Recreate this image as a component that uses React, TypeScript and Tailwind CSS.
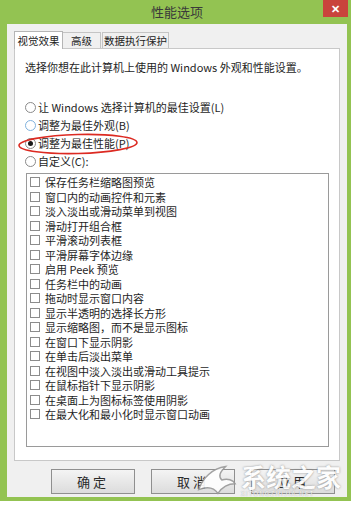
import React from 'react';

const FONT = "font-['Noto_Sans_CJK_SC','Noto_Sans',sans-serif]";

const effects = [
	'保存任务栏缩略图预览',
	'窗口内的动画控件和元素',
	'淡入淡出或滑动菜单到视图',
	'滑动打开组合框',
	'平滑滚动列表框',
	'平滑屏幕字体边缘',
	'启用 Peek 预览',
	'任务栏中的动画',
	'拖动时显示窗口内容',
	'显示半透明的选择长方形',
	'显示缩略图，而不是显示图标',
	'在窗口下显示阴影',
	'在单击后淡出菜单',
	'在视图中淡入淡出或滑动工具提示',
	'在鼠标指针下显示阴影',
	'在桌面上为图标标签使用阴影',
	'在最大化和最小化时显示窗口动画',
];

const radios: { label: string; state: 'off' | 'hover' | 'on' }[] = [
	{ label: '让 Windows 选择计算机的最佳设置(L)', state: 'off' },
	{ label: '调整为最佳外观(B)', state: 'hover' },
	{ label: '调整为最佳性能(P)', state: 'on' },
	{ label: '自定义(C):', state: 'off' },
];

function Radio({ state }: { state: 'off' | 'hover' | 'on' }) {
	return (
		<span
			className={`flex h-[11px] w-[11px] shrink-0 items-center justify-center rounded-full border bg-white ${
				state === 'hover' ? 'border-[#7fb2de]' : 'border-[#8a8a8a]'
			}`}
		>
			{state === 'on' && <span className="h-[5px] w-[5px] rounded-full bg-[#1a1a1a]" />}
		</span>
	);
}

function Button({ label }: { label: string }) {
	return (
		<button
			type="button"
			className="flex h-[25px] w-[84px] items-center justify-center border border-[#8f8f8f] bg-gradient-to-b from-[#f4f4f4] to-[#dcdcdc] text-[13px] tracking-[3px] text-[#2a2a2a]"
		>
			{label}
		</button>
	);
}

export default function App() {
	return (
		<div className={`relative h-[508px] w-[356px] overflow-hidden bg-white ${FONT}`}>
			<div className="flex h-[501px] w-[351px] flex-col bg-[#93c352] pb-[4px] pl-[7px] pr-[4px]">
				{/* title bar */}
				<div className="relative flex h-[24px] shrink-0 items-center justify-center text-[13px] text-[#3a3a3a]">
					性能选项
					<div className="absolute right-[-1px] top-0 flex h-[17px] w-[25px] items-center justify-center bg-[#c9443c] text-[11px] font-bold text-white">
						✕
					</div>
				</div>

				{/* client */}
				<div className="flex flex-1 flex-col bg-[#f0f0f0] px-[7px]">
					<div className="flex h-[24px] shrink-0 items-end whitespace-nowrap pt-[7px] text-[10.5px] text-[#222]">
						<div className="relative z-10 mb-[-1px] flex h-[18px] w-[49px] items-center justify-center border border-b-0 border-[#b5b5b5] bg-white">
							视觉效果
						</div>
						<div className="flex h-[16px] w-[38px] items-center justify-center border border-l-0 border-b-0 border-[#c4c4c4] bg-[#f0f0f0]">
							高级
						</div>
						<div className="ml-[1px] flex h-[16px] w-[67px] items-center justify-center border border-b-0 border-[#c4c4c4] bg-[#f0f0f0]">
							数据执行保护
						</div>
					</div>

					<div className="flex h-[413px] shrink-0 flex-col border border-[#c8c8c8] bg-white pl-[10px] pt-[11px] text-[11px] text-[#1e1e1e]">
						<p className="leading-[14px]">选择你想在此计算机上使用的 Windows 外观和性能设置。</p>

						<div className="mt-[24px] flex flex-col">
							{radios.map((r) => (
								<div key={r.label} className="flex h-[18px] items-center gap-[2px]">
									<Radio state={r.state} />
									<span className="leading-[14px]">{r.label}</span>
								</div>
							))}
						</div>

						<div className="ml-[1px] mt-[3px] flex h-[274px] w-[303px] flex-col border border-[#9a9a9a] bg-white pl-[3px] pt-[1px]">
							{effects.map((e) => (
								<div key={e} className="flex h-[14.5px] items-center gap-[5px]">
									<span className="h-[10px] w-[10px] shrink-0 border border-[#8c8c8c] bg-white" />
									<span className="leading-[14px]">{e}</span>
								</div>
							))}
						</div>
					</div>

					<div className="mt-[8px] flex justify-end gap-[16px] pr-[5px]">
						<Button label="确定" />
						<Button label="取消" />
						<Button label="应用" />
					</div>
				</div>
			</div>

			{/* red highlight around the chosen option */}
			<svg className="absolute left-[17px] top-[132px]" width="124" height="24" viewBox="0 0 124 24">
				<ellipse cx="61" cy="12" rx="59" ry="9.5" fill="none" stroke="#dc2a22" strokeWidth="1.6" transform="rotate(-1.5 61 12)" />
			</svg>

			{/* watermark */}
			<div className="pointer-events-none absolute left-[193px] top-[460px] flex items-start opacity-90">
				<svg width="48" height="40" viewBox="0 0 50 40">
					<path
						d="M6 30 C10 18 20 8 34 6 C28 12 26 16 30 20 C36 18 42 20 44 24 C36 24 30 28 26 34 C22 28 16 26 6 30 Z"
						fill="#ffffff"
						stroke="#9a9a9a"
						strokeWidth="1.5"
					/>
				</svg>
				<div className="mt-[3px] flex flex-col">
					<span className="text-[25px] font-bold leading-[26px] text-white [text-shadow:0_0_2px_#7a7a7a]">
						系统之家
					</span>
					<span className="text-[6.5px] leading-[8px] tracking-[1px] text-white [text-shadow:0_0_1px_#7a7a7a]">
						XITONGZHIJIA.NET
					</span>
				</div>
			</div>
		</div>
	);
}
